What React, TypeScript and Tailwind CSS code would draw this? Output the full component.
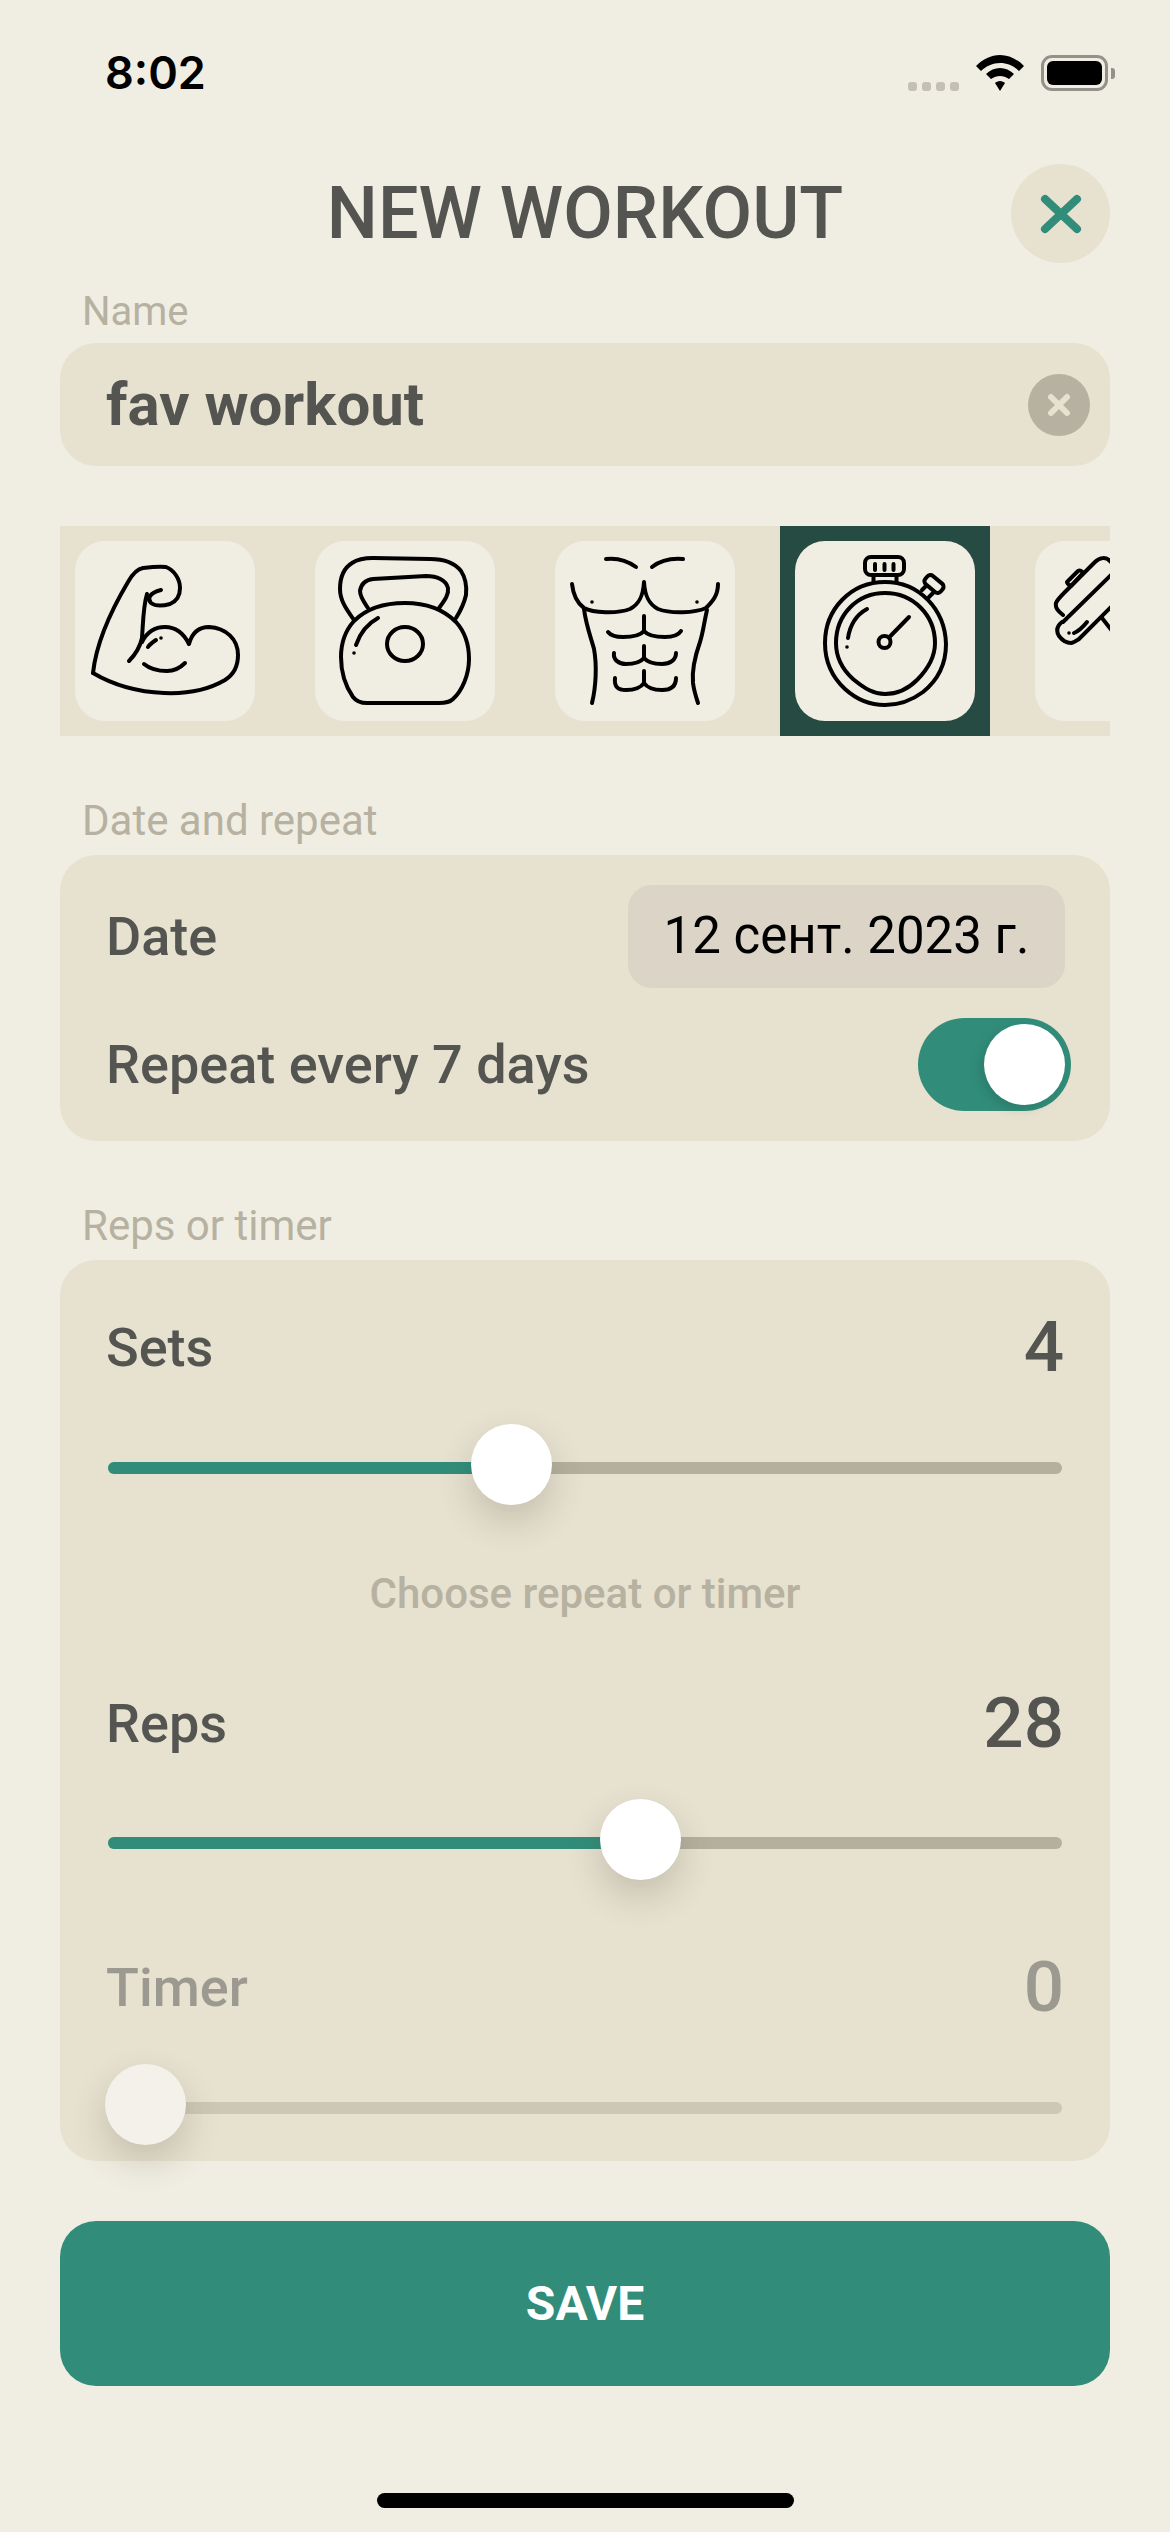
import React from 'react'

const font = { fontFamily: 'Roboto, sans-serif' }

const LineIcon = ({ children }: { children: React.ReactNode }) => (
    <svg viewBox="0 0 180 180" className="w-[180px] h-[180px] shrink-0" fill="none" stroke="#000" strokeWidth="4" strokeLinecap="round" strokeLinejoin="round">
        {children}
    </svg>
)

const Dot = ({ x, y }: { x: number; y: number }) => <circle cx={x} cy={y} r="1.800" fill="#000" stroke="none" />

const MuscleIcon = () => (
    <LineIcon>
        <path d="M18 132C21 104 34 73 53 41C58 32 62 28 68 27C76 26 84 25 91 26C99 29 105 38 105 47C105 55 102 60 95 63C88 65 80 65 76 62C72 58 74 52 86 49" />
        <path d="M72 53C68 66 68 84 67 97C65 106 60 114 54 120" />
        <path d="M67 101C72 91 80 86 90 86C101 86 109 93 114 103C117 92 124 86 134 86C151 87 163 98 163 114C163 125 158 134 150 139C133 149 112 153 89 152C63 151 40 145 18 132" />
        <path d="M69 123C75 128 83 130 92 130C100 130 105 127 110 122" />
        <path d="M73 106C75 103 78 101 81 99" />
        <Dot x={86} y={97} />
    </LineIcon>
)

const KettlebellIcon = () => (
    <LineIcon>
        <path d="M39 80C51 68 69 62 90 62C111 62 129 69 141 81C150 91 154 103 154 118C154 134 147 150 138 158C135 161 130 162 124 162L52 162C46 162 41 160 38 156C31 146 26 131 26 116C26 102 30 90 39 80Z" />
        <path d="M39 79C32 69 25 60 25 48C25 36 29 27 37 22C43 18 50 17 58 17L115 18C128 18 139 21 146 30C150 36 152 44 151 54C149 63 146 69 141 77" />
        <path d="M53 67C49 61 45 56 45 50C46 43 50 39 58 38L111 35C122 35 131 39 133 47C134 54 129 60 124 67" />
        <ellipse cx="90" cy="103" rx="18" ry="17" />
        <path d="M41 104C45 92 52 83 63 77" />
        <Dot x={39} y={112} />
    </LineIcon>
)

const AbsIcon = () => (
    <LineIcon>
        <path d="M51 18C60 17 70 18 81 26" />
        <path d="M97 26C106 19 116 17 128 18" />
        <path d="M17 43C18 52 22 62 29 67C38 72 62 73 75 68C83 64 88 57 89 41C90 57 95 64 103 68C116 73 140 72 151 67C158 60 163 54 163 43" />
        <path d="M89 75L89 90C85 95 77 96 68 96C62 96 56 95 53 91" />
        <path d="M89 90C93 95 101 96 110 96C117 96 123 95 126 90" />
        <path d="M89 105L89 117C85 122 78 123 71 123C64 123 58 119 59 112" />
        <path d="M89 117C93 122 100 123 107 123C115 123 121 119 121 112" />
        <path d="M89 130L89 142C85 148 78 149 71 149C63 149 59 146 60 137" />
        <path d="M89 142C93 148 100 149 107 149C115 149 121 146 121 137" />
        <path d="M29 68C31 84 36 97 39 108C42 124 41 146 37 162" />
        <path d="M152 69C149 82 148 92 145 101C139 118 137 132 138 142C139 150 141 156 143 162" />
        <Dot x={37} y={61} />
        <Dot x={142} y={61} />
    </LineIcon>
)

const StopwatchIcon = () => (
    <LineIcon>
        <path d="M90 41C124 41 150 68 151 103C151 122 143 139 128 151C116 160 104 164 90 164C76 164 62 159 50 148C37 136 30 120 30 102C30 68 56 41 90 41Z" />
        <path d="M90 52C118 52 140 74 140 102C140 116 133 128 122 139C112 149 102 153 90 153C79 153 70 148 58 138C47 128 41 116 41 102C41 74 62 52 90 52Z" />
        <rect x="70" y="16" width="39" height="18" rx="6" />
        <path d="M80 23V29M89.500 23V29M98.500 23V29" />
        <path d="M78.500 34V41M101.500 34V41" />
        <path d="M127 49L131 45M134 56L139 51" />
        <rect x="129" y="37.500" width="20" height="11" rx="4" transform="rotate(40 139 43)" />
        <circle cx="89.500" cy="101" r="6" />
        <path d="M94 96.500L114 76" />
        <path d="M53 97C55 84 61 74 72 68" />
        <Dot x={52} y={106} />
    </LineIcon>
)

const DumbbellIcon = () => (
    <LineIcon>
        <path d="M28 74C23 70 20 67 21 62C22 59 26 55 30 51L60 21C65 16 71 16 75 20C79 24 80 28 78 32L28 81" />
        <path d="M32 41L43 30C45 29 47 30 48 32L36 45C34 44 32 43 32 41Z" />
        <path d="M27 81C22 85 21 90 24 95C27 99 31 102 36 102C39 102 41 100 44 98L90 52" />
        <path d="M67 77L78 91" />
        <path d="M39 92C44 90 48 86 52 81" />
        <Dot x={34} y={92} />
    </LineIcon>
)

const SectionLabel = ({ text, className }: { text: string; className?: string }) => (
    <div className={`pl-[22px] leading-[49px] text-[#b6b1a0] ${className ?? 'h-[59px] pb-[10px] text-[42px]'}`}>{text}</div>
)

const Slider = ({ center, off, className }: { center: number; off?: boolean; className: string }) => (
    <div className={`relative h-[81px] ${className}`}>
        <div className="absolute left-[2px] right-[2px] top-[34px] h-[12px] rounded-full overflow-hidden" style={{ backgroundColor: off ? '#cec7b6' : '#b5af9d' }}>
            {!off && <div className="h-full bg-[#318d7a]" style={{ width: center }}></div>}
        </div>
        <div
            className="absolute top-[-4px] w-[81px] h-[81px] rounded-full shadow-[0_16px_36px_rgba(60,55,40,0.2)]"
            style={{ left: center - 38.500, backgroundColor: off ? '#f3f1e9' : '#ffffff' }}
        ></div>
    </div>
)

const ValueRow = ({ label, value, off, className }: { label: string; value: string; off?: boolean; className?: string }) => (
    <div className={`flex justify-between items-center h-[80px] ${off ? 'text-[#9c9a90]' : 'text-[#545451]'} ${className ?? ''}`}>
        <span className="text-[54px] font-medium">{label}</span>
        <span className="text-[71px] font-medium">{value}</span>
    </div>
)

export default function App() {
    return (
        <div className="w-[1170px] h-[2532px] bg-[#f0eee2] overflow-hidden flex flex-col" style={font}>
            {/* Status bar */}
            <div className="h-[164px] shrink-0 flex justify-between pl-[105px] pr-[55px] pt-[45px]">
                <span className="text-[45px] leading-[56px] font-semibold text-black" style={{ fontFamily: 'Inter, sans-serif' }}>8:02</span>
                <div className="flex items-start pt-[10px]">
                    <div className="flex gap-[5px] mt-[27px] mr-[17px]">
                        <div className="w-[9px] h-[9px] rounded-[3px] bg-[#c4c1b4]"></div>
                        <div className="w-[9px] h-[9px] rounded-[3px] bg-[#c4c1b4]"></div>
                        <div className="w-[9px] h-[9px] rounded-[3px] bg-[#c4c1b4]"></div>
                        <div className="w-[9px] h-[9px] rounded-[3px] bg-[#c4c1b4]"></div>
                    </div>
                    <svg width="48" height="36" viewBox="0 0 48 36" className="mr-[17px]">
                        <path d="M24 0C33 0 41 4 48 11L43 16C38 11 31 8 24 8C17 8 10 11 5 16L0 11C7 4 15 0 24 0Z" fill="#000" />
                        <path d="M24 13C29 13 34 15 38 19L33 24C30 22 27 21 24 21C21 21 18 22 15 24L10 19C14 15 19 13 24 13Z" fill="#000" />
                        <path d="M24 26C26 26 28 27 29 28L24 36L19 28C20 27 22 26 24 26Z" fill="#000" />
                    </svg>
                    <div className="flex items-center">
                        <div className="w-[67px] h-[36px] rounded-[11px] border-[3px] border-[#93918a] p-[3px]">
                            <div className="w-full h-full rounded-[6px] bg-black"></div>
                        </div>
                        <div className="w-[4px] h-[11px] ml-[3px] rounded-r-[3px] bg-[#93918a]"></div>
                    </div>
                </div>
            </div>

            <div className="px-[60px] flex flex-col">
                {/* Header */}
                <div className="grid grid-cols-[1fr_auto_1fr] items-center h-[99px]">
                    <div></div>
                    <h1 className="text-[72px] font-medium text-[#545451] leading-none">NEW WORKOUT</h1>
                    <div className="justify-self-end w-[99px] h-[99px] rounded-full bg-[#e7e1d0] flex items-center justify-center">
                        <svg width="42" height="40" viewBox="0 0 42 40" fill="none" stroke="#318d7a" strokeWidth="8" strokeLinecap="round">
                            <path d="M5 5L37 35M37 5L5 35" />
                        </svg>
                    </div>
                </div>

                {/* Name */}
                <div className="mt-[24px]">
                    <SectionLabel text="Name" className="h-[56px] pb-[7px] text-[40px]" />
                    <div className="h-[123px] rounded-[36px] bg-[#e7e1d0] flex items-center justify-between pl-[46px] pr-[20px]">
                        <span className="text-[60px] font-bold text-[#545451]">fav workout</span>
                        <div className="w-[62px] h-[62px] rounded-full bg-[#b6b1a0] flex items-center justify-center">
                            <svg width="26" height="26" viewBox="0 0 26 26" fill="none" stroke="#e7e1d0" strokeWidth="6" strokeLinecap="round">
                                <path d="M5 5L21 21M21 5L5 21" />
                            </svg>
                        </div>
                    </div>
                </div>

                {/* Icon picker */}
                <div className="mt-[60px] h-[210px] bg-[#e7e1d0] flex gap-[30px] overflow-hidden">
                    <div className="w-[210px] h-[210px] shrink-0 flex items-center justify-center">
                        <div className="w-[180px] h-[180px] rounded-[30px] bg-[#f0eee2]"><MuscleIcon /></div>
                    </div>
                    <div className="w-[210px] h-[210px] shrink-0 flex items-center justify-center">
                        <div className="w-[180px] h-[180px] rounded-[30px] bg-[#f0eee2]"><KettlebellIcon /></div>
                    </div>
                    <div className="w-[210px] h-[210px] shrink-0 flex items-center justify-center">
                        <div className="w-[180px] h-[180px] rounded-[30px] bg-[#f0eee2]"><AbsIcon /></div>
                    </div>
                    <div className="w-[210px] h-[210px] shrink-0 flex items-center justify-center bg-[#264b43]">
                        <div className="w-[180px] h-[180px] rounded-[30px] bg-[#f0eee2]"><StopwatchIcon /></div>
                    </div>
                    <div className="w-[210px] h-[210px] shrink-0 flex items-center justify-center">
                        <div className="w-[180px] h-[180px] rounded-[30px] bg-[#f0eee2]"><DumbbellIcon /></div>
                    </div>
                </div>

                {/* Date and repeat */}
                <div className="mt-[60px]">
                    <SectionLabel text="Date and repeat" />
                    <div className="h-[286px] rounded-[36px] bg-[#e7e1d0] pl-[46px] pr-[45px] pt-[30px]">
                        <div className="flex items-center justify-between">
                            <span className="text-[54px] font-medium text-[#545451]">Date</span>
                            <div className="w-[437px] h-[103px] rounded-[24px] bg-[#dbd4c7] flex items-center justify-center text-[51px] text-black">12 сент. 2023 г.</div>
                        </div>
                        <div className="flex items-center justify-between mt-[30px]">
                            <span className="text-[54px] font-medium text-[#545451]">Repeat every 7 days</span>
                            <div className="w-[153px] h-[93px] mr-[-6px] rounded-full bg-[#318d7a] flex items-center justify-end pr-[6px]">
                                <div className="w-[81px] h-[81px] rounded-full bg-white shadow-[-4px_4px_12px_rgba(0,0,0,0.12)]"></div>
                            </div>
                        </div>
                    </div>
                </div>

                {/* Reps or timer */}
                <div className="mt-[60px]">
                    <SectionLabel text="Reps or timer" />
                    <div className="h-[901px] rounded-[36px] bg-[#e7e1d0] px-[46px] pt-[47px]">
                        <ValueRow label="Sets" value="4" />
                        <Slider center={403} className="mt-[41px]" />
                        <div className="mt-[54px] h-[60px] flex items-center justify-center text-[42px] font-medium text-[#b6b1a0]">Choose repeat or timer</div>
                        <ValueRow label="Reps" value="28" className="mt-[60px]" />
                        <Slider center={532} className="mt-[40px]" />
                        <ValueRow label="Timer" value="0" off className="mt-[63px]" />
                        <Slider center={37} off className="mt-[41px]" />
                    </div>
                </div>

                {/* Save */}
                <div className="mt-[60px] h-[165px] rounded-[36px] bg-[#318d7a] flex items-center justify-center text-[48px] font-bold text-white">SAVE</div>
            </div>

            {/* Home indicator */}
            <div className="mt-[107px] mx-auto w-[417px] h-[15px] shrink-0 rounded-full bg-black"></div>
        </div>
    )
}
